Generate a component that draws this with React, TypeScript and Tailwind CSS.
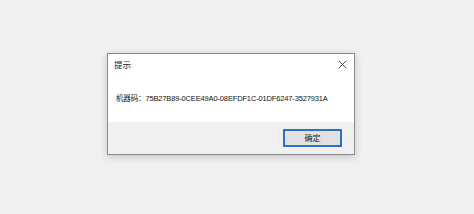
export default function App() {
  return (
    <div
      className="w-[474px] h-[214px] bg-[#f0f0f0] pl-[107px] pt-[53px]"
      style={{ fontFamily: '"Noto Sans CJK SC", "Noto Sans", sans-serif' }}
    >
      <div className="w-[248px] h-[102px] border border-[#8a8a8a] bg-white shadow-[0_2px_8px_rgba(0,0,0,0.18)] flex flex-col">
        {/* Title bar */}
        <div className="h-[19px] mt-[1px] flex items-center justify-between pl-[6px] pr-[7px]">
          <span className="text-[8.5px] text-[#1a1a1a] leading-none">提示</span>
          <svg width="9" height="9" viewBox="0 0 10 10" className="text-[#333]">
            <path d="M1 1 L9 9 M9 1 L1 9" stroke="currentColor" strokeWidth="1" />
          </svg>
        </div>
        {/* Body */}
        <div className="flex-1 flex items-center pl-[8px] pt-[1px]">
          <span
            className="text-[7.5px] text-[#111] leading-none whitespace-nowrap tracking-[-0.15px]"
            style={{ fontFamily: '"Liberation Sans", "Noto Sans CJK SC", sans-serif' }}
          >
            机器码：75B27B89-0CEE49A0-08EFDF1C-01DF6247-3527931A
          </span>
        </div>
        {/* Footer */}
        <div className="h-[32px] bg-[#f0f0f0] flex items-center justify-end pr-[12px]">
          <button className="w-[59px] h-[18px] border-2 border-[#2f6fbf] bg-[#e1e1e1] text-[8px] text-[#1a1a1a] leading-none flex items-center justify-center">
            确定
          </button>
        </div>
      </div>
    </div>
  );
}
